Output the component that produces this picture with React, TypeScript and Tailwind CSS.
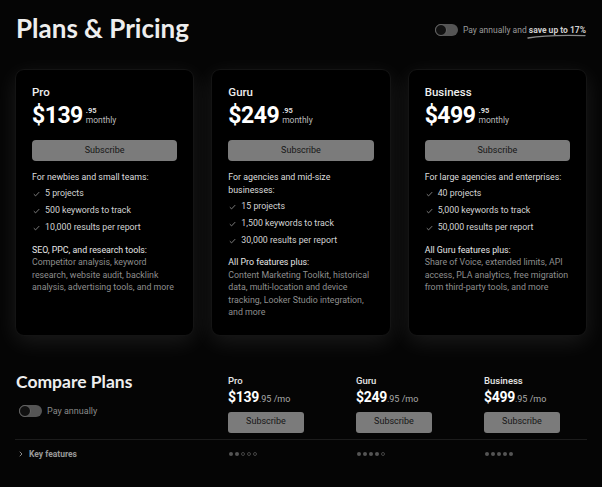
import { ChevronRight } from 'lucide-react'

type Plan = {
  name: string
  price: string
  intro: string[]
  items: string[]
  extraTitle: string
  extra: string[]
  level: number
}

const plans: Plan[] = [
  {
    name: 'Pro',
    price: '139',
    intro: ['For newbies and small teams:'],
    items: ['5 projects', '500 keywords to track', '10,000 results per report'],
    extraTitle: 'SEO, PPC, and research tools:',
    extra: [
      'Competitor analysis, keyword',
      'research, website audit, backlink',
      'analysis, advertising tools, and more',
    ],
    level: 2,
  },
  {
    name: 'Guru',
    price: '249',
    intro: ['For agencies and mid-size', 'businesses:'],
    items: ['15 projects', '1,500 keywords to track', '30,000 results per report'],
    extraTitle: 'All Pro features plus:',
    extra: [
      'Content Marketing Toolkit, historical',
      'data, multi-location and device',
      'tracking, Looker Studio integration,',
      'and more',
    ],
    level: 4,
  },
  {
    name: 'Business',
    price: '499',
    intro: ['For large agencies and enterprises:'],
    items: ['40 projects', '5,000 keywords to track', '50,000 results per report'],
    extraTitle: 'All Guru features plus:',
    extra: [
      'Share of Voice, extended limits, API',
      'access, PLA analytics, free migration',
      'from third-party tools, and more',
    ],
    level: 5,
  },
]

const heading = { fontFamily: 'Lato, Inter, sans-serif' }

function Toggle() {
  return (
    <span className="flex h-[12px] w-[23px] shrink-0 items-center rounded-full bg-[#555]">
      <span className="h-[12px] w-[12px] rounded-full border border-[#666] bg-[#111]" />
    </span>
  )
}

function Check() {
  return (
    <svg width="7" height="6" viewBox="0 0 7 6" className="shrink-0">
      <path d="M0.8 3.2 L2.6 4.9 L6.2 1.1" fill="none" stroke="#8a8a8a" strokeWidth="0.9" />
    </svg>
  )
}

function PlanCard({ plan }: { plan: Plan }) {
  return (
    <div className="rounded-[9px] border border-[#141414] bg-black px-[16px] pt-[14px] pb-[16px] shadow-[0_6px_22px_rgba(255,255,255,0.09)]">
      <div className="text-[11.5px] leading-[16px] font-medium text-[#eee]">{plan.name}</div>
      <div className="mt-[3px] flex items-start">
        <span className="text-[23px] leading-[26px] font-bold tracking-[-0.5px] text-white">
          ${plan.price}
        </span>
        <span className="ml-[3px] mt-[4px] flex flex-col">
          <span className="text-[7.5px] leading-[8px] font-bold text-[#ddd]">.95</span>
          <span className="text-[8.5px] leading-[11px] text-[#bbb]">monthly</span>
        </span>
      </div>
      <button className="mt-[11px] h-[21px] w-full rounded-[4px] bg-[#7b7b7b] text-[9px] text-[#161616]">
        Subscribe
      </button>
      <div className="mt-[10px] text-[8.8px] leading-[12.5px] text-[#ddd]">
        {plan.intro.map((l) => (
          <div key={l} className="whitespace-nowrap">{l}</div>
        ))}
      </div>
      <ul className="mt-[2px]">
        {plan.items.map((item) => (
          <li key={item} className="flex h-[17px] items-center gap-[5px] pl-[1px] text-[8.8px] text-[#d4d4d4]">
            <Check />
            {item}
          </li>
        ))}
      </ul>
      <div className="mt-[7px] text-[8.8px] leading-[12.5px] text-[#e6e6e6]">{plan.extraTitle}</div>
      <div className="text-[8.8px] leading-[12.5px] text-[#8e8e8e]">
        {plan.extra.map((l) => (
          <div key={l} className="whitespace-nowrap">{l}</div>
        ))}
      </div>
    </div>
  )
}

function Dots({ level }: { level: number }) {
  return (
    <div className="flex gap-[2px]">
      {[1, 2, 3, 4, 5].map((i) =>
        i <= level ? (
          <span key={i} className="h-[4px] w-[4px] rounded-full bg-[#555]" />
        ) : (
          <span key={i} className="h-[4px] w-[4px] rounded-full border border-[#444]" />
        ),
      )}
    </div>
  )
}

export default function App() {
  return (
    <div
      className="h-[487px] w-[602px] overflow-hidden bg-[#050505] px-[15px]"
      style={{ fontFamily: 'Roboto, Inter, sans-serif' }}
    >
      <div className="flex items-center justify-between pt-[11px]">
        <h1
          className="pl-[1px] text-[26px] leading-[34px] font-bold text-[#eee]"
          style={heading}
        >
          Plans &amp; Pricing
        </h1>
        <div className="mt-[4px] flex items-center gap-[5px] pr-[1px]">
          <Toggle />
          <span className="text-[8.5px] text-[#9a9a9a]">
            Pay annually and{' '}
            <span className="relative font-bold text-[#cfcfcf]">
              save up to 17%
              <svg
                width="60"
                height="5"
                viewBox="0 0 60 5"
                className="absolute -bottom-[4px] left-[-2px]"
              >
                <path d="M1 4 Q20 0.6 58 1.6" fill="none" stroke="#8a8a8a" strokeWidth="1.4" strokeLinecap="round" />
              </svg>
            </span>
          </span>
        </div>
      </div>

      <div className="mt-[24px] grid grid-cols-3 gap-[17px]">
        {plans.map((p) => (
          <PlanCard key={p.name} plan={p} />
        ))}
      </div>

      <div className="mt-[38px] flex">
        <div className="w-[213px] shrink-0">
          <h2
            className="pl-[1px] text-[17.5px] leading-[16px] font-bold text-[#eee]"
            style={heading}
          >
            Compare Plans
          </h2>
          <div className="mt-[15px] flex items-center gap-[5px] pl-[4px]">
            <Toggle />
            <span className="text-[9px] text-[#8a8a8a]">Pay annually</span>
          </div>
        </div>
        {plans.map((p) => (
          <div key={p.name} className="w-[128px] shrink-0 last:w-auto last:flex-1">
            <div className="text-[9.5px] leading-[14px] font-medium text-[#e6e6e6]">{p.name}</div>
            <div className="flex h-[18px] items-baseline">
              <span className="text-[14px] leading-[18px] font-bold tracking-[-0.3px] text-white">
                ${p.price}
              </span>
              <span className="text-[9px] text-[#aaa]">.95 /mo</span>
            </div>
            <button className="mt-[6px] h-[21px] w-[76px] rounded-[3px] bg-[#7b7b7b] text-[9px] text-[#161616]">
              Subscribe
            </button>
          </div>
        ))}
      </div>

      <div className="mt-[6px] h-px bg-[#1c1c1c]" />

      <div className="flex h-[29px] items-center">
        <div className="flex w-[213px] shrink-0 items-center gap-[4px] pl-[2px]">
          <ChevronRight size={8} strokeWidth={3} color="#888" />
          <span className="text-[8.5px] font-bold text-[#999]">Key features</span>
        </div>
        {plans.map((p) => (
          <div key={p.name} className="w-[128px] shrink-0 pl-[1px]">
            <Dots level={p.level} />
          </div>
        ))}
      </div>
    </div>
  )
}
